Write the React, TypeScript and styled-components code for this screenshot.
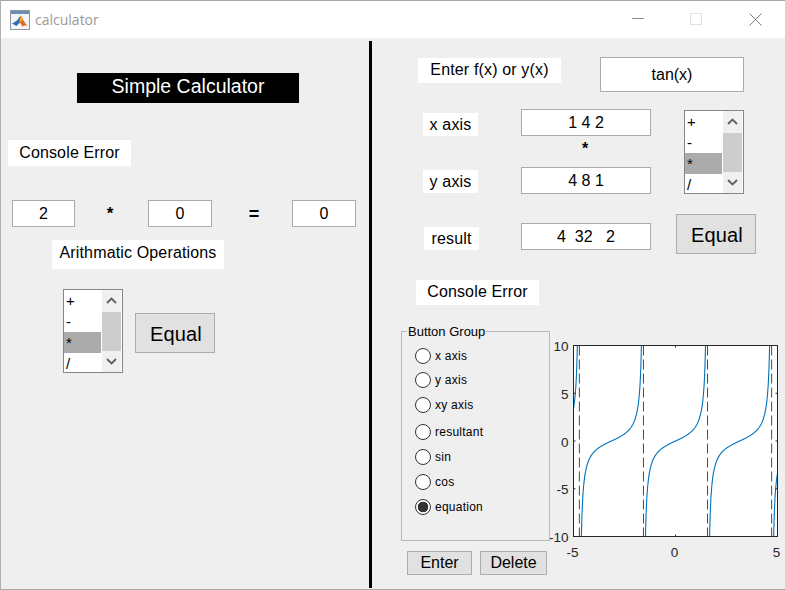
import React from 'react'
import styled, { createGlobalStyle } from 'styled-components'

const GlobalStyle = createGlobalStyle`
  html, body {
    margin: 0;
    padding: 0;
    background: #efefef;
  }
  * {
    box-sizing: border-box;
  }
`

const Window = styled.div`
  width: 785px;
  height: 590px;
  position: relative;
  display: flex;
  flex-direction: column;
  overflow: hidden;
  background: #efefef;
  border-left: 1px solid #b0b0b0;
  border-bottom: 1px solid #a8a8a8;
  font-family: 'Liberation Sans', Arial, sans-serif;
  color: #000;
`

// bits of a window behind this one, showing under the bottom edge
const ClippedEdge = styled.div`
  position: absolute;
  left: 378px;
  bottom: -1px;
  width: 155px;
  height: 1px;
  background: repeating-linear-gradient(90deg, #4a4a4a 0 5px, transparent 5px 9px, #777 9px 13px, transparent 13px 19px);
`

const TitleBar = styled.div`
  height: 38px;
  flex: none;
  display: flex;
  align-items: center;
  background: #fff;
  border-top: 1px solid #a6a6a6;
  padding-left: 9px;
`

const WindowTitle = styled.span`
  margin-left: 5px;
  font-family: 'Open Sans', 'Noto Sans', sans-serif;
  font-size: 14px;
  color: #9a9a9a;
`

const WindowControls = styled.div`
  margin-left: auto;
  display: flex;
  align-items: center;
`

const WindowControl = styled.svg<{ $right: number }>`
  display: block;
  width: 14px;
  height: 13px;
  margin-right: ${({ $right }) => $right}px;
`

const Content = styled.div`
  flex: 1;
  display: flex;
  min-height: 0;
`

const LeftPane = styled.section`
  width: 368px;
  flex: none;
  display: flex;
  flex-direction: column;
  align-items: flex-start;
`

const PaneDivider = styled.div`
  width: 3px;
  flex: none;
  margin: 3px 0 1px;
  background: #000;
`

const RightPane = styled.section`
  flex: 1;
  display: flex;
  flex-direction: column;
  align-items: flex-start;
`

const Heading = styled.div`
  width: 222px;
  height: 30px;
  margin: 35px 0 0 76px;
  background: #000;
  color: #fff;
  font-size: 19.5px;
  line-height: 26px;
  text-align: center;
`

const Label = styled.div<{ $width: number; $height: number }>`
  width: ${({ $width }) => $width}px;
  height: ${({ $height }) => $height}px;
  flex: none;
  display: flex;
  align-items: center;
  justify-content: center;
  background: #fff;
  font-size: 16px;
  letter-spacing: 0.15px;
  white-space: nowrap;
`

const LeftError = styled(Label)`
  margin: 37px 0 0 7px;
`

const EquationRow = styled.div`
  margin: 34px 0 0 11px;
  display: grid;
  grid-template-columns: 63px 73px 64px 80px 64px;
  grid-auto-rows: 27px;
  align-items: center;
  justify-items: center;
`

const Field = styled.input<{ $width?: number; $height?: number }>`
  display: block;
  width: ${({ $width }) => ($width ? `${$width}px` : '100%')};
  height: ${({ $height }) => ($height ? `${$height}px` : '100%')};
  flex: none;
  padding: 0;
  margin: 0;
  background: #fff;
  border: 1px solid #ababab;
  outline: none;
  color: #000;
  font-family: inherit;
  font-size: 16px;
  text-align: center;
  white-space: pre;
`

const StarOperator = styled.span`
  padding-right: 3px;
  font-size: 17px;
  font-weight: 700;
`

const EqualsOperator = styled.span`
  padding: 2px 0 0 4px;
  font-size: 18px;
  font-weight: 700;
`

const OpsLabel = styled(Label)`
  margin: 13px 0 0 51px;
  padding-bottom: 4px;
`

const OpsRow = styled.div`
  margin: 20px 0 0 62px;
  display: flex;
  align-items: flex-start;
  gap: 12px;
`

const ListBox = styled.div`
  width: 60px;
  height: 84px;
  flex: none;
  display: flex;
  background: #fff;
  border: 1px solid #82878f;
  overflow: hidden;
`

const ListItems = styled.ul`
  width: 37px;
  margin: 0;
  padding: 0;
  list-style: none;
`

const ListItem = styled.li<{ $selected?: boolean }>`
  height: 21px;
  padding-left: 2px;
  background: ${({ $selected }) => ($selected ? '#ababab' : 'transparent')};
  font-size: 15px;
  line-height: 21px;
`

const ScrollBar = styled.div`
  width: 19px;
  flex: none;
  margin: 0 1px 0 auto;
  display: flex;
  flex-direction: column;
  align-items: center;
  justify-content: space-between;
  background: #f0f0f0;
`

const ScrollArrow = styled.svg`
  display: block;
  width: 19px;
  height: 21px;
`

const ScrollThumb = styled.div`
  width: 19px;
  height: 39px;
  background: #cdcdcd;
`

const PushButton = styled.button<{ $width: number; $height: number; $size: number }>`
  width: ${({ $width }) => $width}px;
  height: ${({ $height }) => $height}px;
  flex: none;
  padding: 0;
  background: #e1e1e1;
  border: 1px solid #adadad;
  color: #000;
  font-family: inherit;
  font-size: ${({ $size }) => $size}px;
`

const EqualButton = styled(PushButton)`
  padding: 2px 0 0 2px;
  letter-spacing: 0.15px;
`

const OpsEqual = styled(EqualButton)`
  margin-top: 24px;
`

const FormulaRow = styled.div`
  margin: 19px 0 0 46px;
  display: flex;
  align-items: flex-start;
`

const FormulaLabel = styled(Label)`
  margin: 1px 39px 0 0;
  padding-bottom: 2px;
`

const AxisSection = styled.div`
  margin: 17px 0 0 51px;
  display: flex;
  align-items: flex-start;
`

const AxisFields = styled.div`
  width: 228px;
  display: flex;
  flex-direction: column;
`

const AxisRow = styled.div`
  display: flex;
  align-items: flex-end;
  justify-content: space-between;
  height: 27px;
`

const ResultRow = styled(AxisRow)`
  margin-top: 29px;
  padding-left: 1px;
`

const YLabel = styled(Label)`
  margin-bottom: 1px;
`

const StarRow = styled.div`
  height: 31px;
  padding: 0 2px 0 98px;
  text-align: center;
  font-size: 16px;
  font-weight: 700;
  line-height: 26px;
`

const AxisSide = styled.div`
  margin-left: 25px;
  display: flex;
  flex-direction: column;
  align-items: flex-start;
`

const SideList = styled(ListBox)`
  margin: 1px 0 0 8px;
`

const SideEqual = styled(EqualButton)`
  margin-top: 20px;
`

const RightError = styled(Label)`
  margin: 26px 0 0 44px;
  padding-bottom: 2px;
`

const BottomSection = styled.div`
  margin: 26px 0 0 29px;
  display: flex;
  align-items: flex-start;
`

const GroupColumn = styled.div`
  width: 149px;
  flex: none;
`

const RadioGroup = styled.div`
  height: 210px;
  position: relative;
  padding: 15px 0 0 13px;
  border: 1px solid #b8b8b8;
`

const GroupCaption = styled.span`
  position: absolute;
  top: -7px;
  left: 5px;
  padding: 0 1px;
  background: #efefef;
  font-size: 13px;
  line-height: 14px;
`

const RadioRow = styled.label<{ $top: number }>`
  display: flex;
  align-items: center;
  height: 17px;
  margin-top: ${({ $top }) => $top}px;
  gap: 4px;
  font-size: 12px;
  letter-spacing: 0.25px;
`

const RadioDot = styled.input`
  appearance: none;
  width: 16px;
  height: 16px;
  flex: none;
  margin: 0;
  border: 1px solid #333;
  border-radius: 50%;
  background: #fff;

  &:checked {
    background: radial-gradient(circle, #333 0 5px, #fff 5.6px);
  }
`

const GroupButtons = styled.div`
  margin-top: 10px;
  padding-left: 6px;
  display: flex;
  gap: 8px;
`

const Plot = styled.svg`
  display: block;
  width: 235px;
  height: 230px;
  flex: none;
  margin-top: 7px;
  overflow: visible;
`

const MatlabIcon = () => (
  <svg width="20" height="20" viewBox="0 0 20 20">
    <rect x="0.5" y="0.5" width="19" height="19" fill="#f3f5f8" stroke="#8f959c" />
    <rect x="1" y="1" width="18" height="3" fill="#6d8fb5" />
    <path d="M2 13.5 7 10.5 10.5 5.5 10.5 12 6.5 16Z" fill="#2f6fb2" />
    <path d="M10.5 5.5C12.5 7 14 12.5 17.5 16 15.5 15.5 13.5 15 12.5 17 11.5 14.5 10.5 12 8.5 12.5Z" fill="#e2682a" />
    <path d="M10.5 5.5C11.5 6.5 12.3 9 13.3 11 12 10.5 11 11 10 12.2Z" fill="#f0b030" />
  </svg>
)

const Chevron = ({ up }: { up?: boolean }) => (
  <ScrollArrow viewBox="0 0 19 21">
    <path
      d={up ? 'M5 13 9.5 8.5 14 13' : 'M5 8 9.5 12.5 14 8'}
      fill="none"
      stroke="#606060"
      strokeWidth="1.8"
    />
  </ScrollArrow>
)

const Operations = () => (
  <>
    <ListItems>
      <ListItem>+</ListItem>
      <ListItem>-</ListItem>
      <ListItem $selected>*</ListItem>
      <ListItem>/</ListItem>
    </ListItems>
    <ScrollBar>
      <Chevron up />
      <ScrollThumb />
      <Chevron />
    </ScrollBar>
  </>
)

// axes box inside the svg
const BOX = { left: 23.5, top: 7.5, width: 204, height: 191 }
const toX = (x: number) => BOX.left + ((x + 5) / 10) * BOX.width
const toY = (y: number) => BOX.top + ((10 - y) / 20) * BOX.height

const tanPath = (from: number, to: number) => {
  const points: string[] = []
  for (let i = 0; i <= 200; i += 1) {
    const x = from + ((to - from) * i) / 200
    const y = Math.max(-10, Math.min(10, Math.tan(x)))
    points.push(`${toX(x).toFixed(2)},${toY(y).toFixed(2)}`)
  }
  return `M${points.join('L')}`
}

// distance from an asymptote to where tan(x) leaves the +-10 range
const gap = Math.PI / 2 - Math.atan(10)
const branches: [number, number][] = [
  [-5, -1.5 * Math.PI - gap],
  [-1.5 * Math.PI + gap, -Math.PI / 2 - gap],
  [-Math.PI / 2 + gap, Math.PI / 2 - gap],
  [Math.PI / 2 + gap, 1.5 * Math.PI - gap],
  [1.5 * Math.PI + gap, 5],
]
const asymptotes = [-1.5 * Math.PI, -Math.PI / 2, Math.PI / 2, 1.5 * Math.PI]
const yTicks = [10, 5, 0, -5, -10]
const xTicks = [-5, 0, 5]

const TanPlot = () => (
  <Plot viewBox="0 0 235 230">
    <rect x={BOX.left} y={BOX.top} width={BOX.width} height={BOX.height} fill="#fff" />
    {asymptotes.map((a) => (
      <line
        key={a}
        x1={toX(a)}
        x2={toX(a)}
        y1={BOX.top}
        y2={BOX.top + BOX.height}
        stroke="#4a4a4a"
        strokeWidth="1"
        strokeDasharray="10 4"
      />
    ))}
    {branches.map(([from, to]) => (
      <path key={from} d={tanPath(from, to)} fill="none" stroke="#0072bd" strokeWidth="1.1" />
    ))}
    <rect x={BOX.left} y={BOX.top} width={BOX.width} height={BOX.height} fill="none" stroke="#262626" strokeWidth="1" />
    {yTicks.map((t) => (
      <g key={t}>
        <line x1={BOX.left} x2={BOX.left + 2} y1={toY(t)} y2={toY(t)} stroke="#262626" />
        <line x1={BOX.left + BOX.width - 2} x2={BOX.left + BOX.width} y1={toY(t)} y2={toY(t)} stroke="#262626" />
        <text x={BOX.left - 5} y={toY(t) + 5.5} textAnchor="end" fontSize="13.5" fill="#262626">
          {t}
        </text>
      </g>
    ))}
    {xTicks.map((t) => (
      <g key={t}>
        <line x1={toX(t)} x2={toX(t)} y1={BOX.top} y2={BOX.top + 2} stroke="#262626" />
        <line x1={toX(t)} x2={toX(t)} y1={BOX.top + BOX.height - 2} y2={BOX.top + BOX.height} stroke="#262626" />
        <text x={toX(t) - 1} y={BOX.top + BOX.height + 20} textAnchor="middle" fontSize="13.5" fill="#262626">
          {t}
        </text>
      </g>
    ))}
  </Plot>
)

const radios: { label: string; top: number; checked?: boolean }[] = [
  { label: 'x axis', top: 0 },
  { label: 'y axis', top: 7 },
  { label: 'xy axis', top: 8 },
  { label: 'resultant', top: 10 },
  { label: 'sin', top: 8 },
  { label: 'cos', top: 8 },
  { label: 'equation', top: 8, checked: true },
]

const App = () => (
  <Window>
    <GlobalStyle />
    <TitleBar>
      <MatlabIcon />
      <WindowTitle>calculator</WindowTitle>
      <WindowControls>
        <WindowControl $right={43} viewBox="0 0 14 13">
          <line x1="0" x2="12" y1="5.5" y2="5.5" stroke="#8a8a8a" />
        </WindowControl>
        <WindowControl $right={46} viewBox="0 0 14 13">
          <rect x="1.5" y="0.5" width="11" height="11" fill="none" stroke="#e2e2e2" />
        </WindowControl>
        <WindowControl $right={22} viewBox="0 0 14 13">
          <path d="M0.5 0.5 12.5 12.5M12.5 0.5 0.5 12.5" stroke="#7c7c7c" fill="none" />
        </WindowControl>
      </WindowControls>
    </TitleBar>
    <Content>
      <LeftPane>
        <Heading>Simple Calculator</Heading>
        <LeftError $width={123} $height={26}>Console Error</LeftError>
        <EquationRow>
          <Field readOnly value="2" />
          <StarOperator>*</StarOperator>
          <Field readOnly value="0" />
          <EqualsOperator>=</EqualsOperator>
          <Field readOnly value="0" />
        </EquationRow>
        <OpsLabel $width={172} $height={29}>Arithmatic Operations</OpsLabel>
        <OpsRow>
          <ListBox>
            <Operations />
          </ListBox>
          <OpsEqual $width={80} $height={40} $size={20}>Equal</OpsEqual>
        </OpsRow>
      </LeftPane>
      <PaneDivider />
      <RightPane>
        <FormulaRow>
          <FormulaLabel $width={143} $height={25}>Enter f(x) or y(x)</FormulaLabel>
          <Field readOnly value="tan(x)" $width={144} $height={35} />
        </FormulaRow>
        <AxisSection>
          <AxisFields>
            <AxisRow>
              <Label $width={55} $height={23}>x axis</Label>
              <Field readOnly value="1 4 2" $width={130} $height={27} />
            </AxisRow>
            <StarRow>*</StarRow>
            <AxisRow>
              <YLabel $width={55} $height={23}>y axis</YLabel>
              <Field readOnly value="4 8 1" $width={130} $height={27} />
            </AxisRow>
            <ResultRow>
              <Label $width={55} $height={23}>result</Label>
              <Field readOnly value="4  32   2" $width={130} $height={27} />
            </ResultRow>
          </AxisFields>
          <AxisSide>
            <SideList>
              <Operations />
            </SideList>
            <SideEqual $width={80} $height={40} $size={20}>Equal</SideEqual>
          </AxisSide>
        </AxisSection>
        <RightError $width={123} $height={25}>Console Error</RightError>
        <BottomSection>
          <GroupColumn>
            <RadioGroup>
              <GroupCaption>Button Group</GroupCaption>
              {radios.map((r) => (
                <RadioRow key={r.label} $top={r.top}>
                  <RadioDot type="radio" name="plot" readOnly defaultChecked={r.checked} />
                  {r.label}
                </RadioRow>
              ))}
            </RadioGroup>
            <GroupButtons>
              <PushButton $width={65} $height={24} $size={16}>Enter</PushButton>
              <PushButton $width={67} $height={24} $size={16}>Delete</PushButton>
            </GroupButtons>
          </GroupColumn>
          <TanPlot />
        </BottomSection>
      </RightPane>
    </Content>
    <ClippedEdge />
  </Window>
)

export default App
